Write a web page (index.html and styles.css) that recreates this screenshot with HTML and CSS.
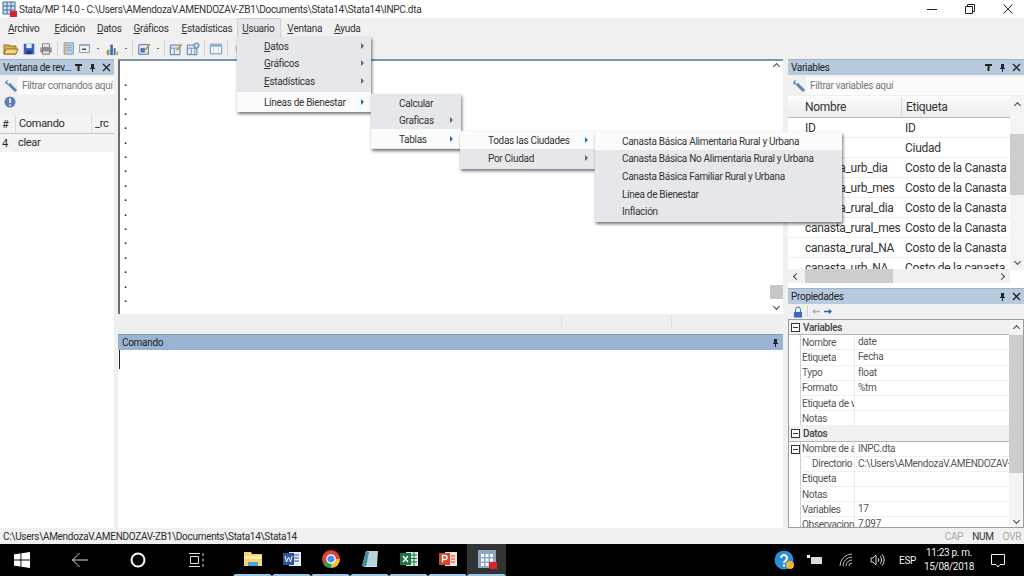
FILE: index.html
```html
<!DOCTYPE html>
<html lang="es">
<head>
    <meta charset="UTF-8">
    <title>Stata/MP 14.0</title>
    <link rel="stylesheet" href="styles.css">
</head>
<body>
<div class="app">
    <div class="titlebar">
        <svg class="app-icon" viewBox="0 0 16 16" width="16" height="16">
            <rect x="1" y="1" width="12" height="12" fill="#d6e2ef" stroke="#3d6a9c"/>
            <path d="M1 5h12M1 9h12M5 1v12M9 1v12" stroke="#3d6a9c"/>
            <rect x="8" y="10" width="7" height="6" fill="#d6262a"/>
        </svg>
        <span class="title-text">Stata/MP 14.0 - C:\Users\AMendozaV.AMENDOZAV-ZB1\Documents\Stata14\Stata14\INPC.dta</span>
        <div class="win-buttons">
            <svg viewBox="0 0 12 12" width="12" height="12"><path d="M1 6.500h10" stroke="#222"/></svg>
            <svg viewBox="0 0 12 12" width="12" height="12"><path d="M1.500 3.500h7v7h-7zM3.500 3.500v-2h7v7h-2" fill="none" stroke="#222"/></svg>
            <svg viewBox="0 0 12 12" width="12" height="12"><path d="M1.500 1.500l9 9M10.500 1.500l-9 9" stroke="#222"/></svg>
        </div>
    </div>

    <div class="menubar">
        <span class="menu-top"><u>A</u>rchivo</span>
        <span class="menu-top"><u>E</u>dición</span>
        <span class="menu-top"><u>D</u>atos</span>
        <span class="menu-top"><u>G</u>ráficos</span>
        <span class="menu-top"><u>E</u>stadísticas</span>
        <span class="menu-top open"><u>U</u>suario</span>
        <span class="menu-top"><u>V</u>entana</span>
        <span class="menu-top"><u>A</u>yuda</span>
    </div>

    <div class="toolbar">
        <svg class="wide" viewBox="0 0 16 16"><path d="M1 4h5l1 1h6v8H1z" fill="#d9b24c" stroke="#8f6f1f"/><path d="M3 8h12l-2 5H1z" fill="#f2d77e" stroke="#8f6f1f"/></svg>
        <svg viewBox="0 0 16 16"><path d="M2 2h12v12H2z" fill="#3a5fc0"/><path d="M5 2h6v5H5z" fill="#e8eef8"/><path d="M5 10h6v4H5z" fill="#22387c"/></svg>
        <svg viewBox="0 0 16 16"><path d="M4 2h8v4H4z" fill="#eee" stroke="#777"/><path d="M1.500 6h13v6h-13z" fill="#8b8f98"/><path d="M4 10h8v4H4z" fill="#ddd" stroke="#777"/></svg>
        <span class="tool-sep"></span>
        <svg class="slim" viewBox="0 0 16 16"><path d="M3 1h11v14H3z" fill="#bcd0e6" stroke="#6f8dab"/><path d="M5 4h7M5 7h7M5 10h7" stroke="#7d97b3"/><path d="M3 1v14" stroke="#d0a93c" stroke-width="2"/></svg>
        <svg class="slim" viewBox="0 0 16 16"><path d="M2 3h12v10H2z" fill="#eef1f5" stroke="#7b8794"/><path d="M2 3h12v2H2z" fill="#9db3c9"/><path d="M5 8h5v2H5z" fill="#555"/></svg>
        <span class="drop"></span>
        <svg class="after-drop" viewBox="0 0 16 16"><path d="M2 9h3v6H2z" fill="#7aa63c"/><path d="M6 3h3v12H6z" fill="#3a6ea8"/><path d="M10 7h2v8h-2z" fill="#3a6ea8"/><path d="M13 11h2v4h-2z" fill="#c9a23a"/></svg>
        <span class="drop"></span>
        <span class="tool-sep"></span>
        <svg viewBox="0 0 16 16"><path d="M2 3h11v11H2z" fill="#dfe8f2" stroke="#456a96"/><path d="M4 7h5v5H4z" fill="#4e79ad"/><path d="M8 9l6-7 1.500 1-6 7z" fill="#c09a32"/></svg>
        <span class="drop"></span>
        <span class="tool-sep"></span>
        <svg viewBox="0 0 16 16"><path d="M1.500 3.500h11v11h-11z" fill="#e3ebf4" stroke="#456a96"/><path d="M1.500 7h11M6 7v7" stroke="#6f8dab"/><path d="M8 9l6-7 1.500 1-6 7z" fill="#c09a32"/></svg>
        <svg viewBox="0 0 16 16"><path d="M1.500 3.500h11v11h-11z" fill="#e3ebf4" stroke="#456a96"/><path d="M1.500 7h11M6 7v7M10 7v7" stroke="#6f8dab"/><circle cx="12" cy="4" r="3" fill="#bcd6ea" stroke="#3b7ba8"/></svg>
        <span class="tool-sep"></span>
        <svg viewBox="0 0 16 16"><path d="M1.500 2.500h13v11h-13z" fill="#fff" stroke="#5d84ad"/><path d="M1.500 2.500h13v3h-13z" fill="#8fb0d0"/><path d="M5.500 5.500v8M10.500 5.500v8" stroke="#a9bfd5"/></svg>
        <span class="tool-sep"></span>
        <svg class="after-drop" viewBox="0 0 16 16"><circle cx="8" cy="8" r="6.500" fill="#c8c8c8"/></svg>
    </div>

    <div class="workspace">
        <aside class="review">
            <div class="panel-head">
                <span class="panel-title">Ventana de rev...</span>
                <span class="head-icons">
                    <svg viewBox="0 0 9 9" width="9" height="9"><path d="M1 1h7v2H5.500v5h-2V3H1z" fill="#222"/></svg>
                    <svg viewBox="0 0 9 9" width="9" height="9"><path d="M3 1h3v4h1v1H5v3H4V6H2V5h1z" fill="#222"/></svg>
                    <svg viewBox="0 0 9 9" width="9" height="9"><path d="M1 1l7 7M8 1L1 8" stroke="#222" stroke-width="1.300"/></svg>
                </span>
            </div>
            <div class="filter-row">
                <svg class="wrench" viewBox="0 0 14 14" width="14" height="14"><path d="M5 5l7 7" stroke="#5d84ad" stroke-width="3"/><path d="M1 4a3.500 3.500 0 0 1 3-3l-1 2.500L4.500 5 7 4a3.500 3.500 0 0 1-6 0z" fill="#5d84ad"/></svg>
                <span class="filter-box">Filtrar comandos aquí</span>
            </div>
            <div class="info-row">
                <svg viewBox="0 0 12 12" width="12" height="12"><circle cx="6" cy="6" r="5.500" fill="#5a7fb0"/><path d="M6 2.500v4.500M6 8.500v1.500" stroke="#fff" stroke-width="1.600"/></svg>
            </div>
            <div class="review-head">
                <span class="col-num">#</span>
                <span class="col-cmd">Comando</span>
                <span class="col-rc">_rc</span>
            </div>
            <div class="review-row">
                <span class="col-num">4</span>
                <span class="col-cmd">clear</span>
            </div>
        </aside>

        <main class="center">
            <div class="results">
                <div class="dots">
                    <div>.</div><div>.</div><div>.</div><div>.</div>
                    <div>.</div><div>.</div><div>.</div><div>.</div>
                    <div>.</div><div>.</div><div>.</div><div>.</div>
                    <div>.</div><div>.</div><div>.</div><div>.</div>
                </div>
                <div class="results-scroll">
                    <span class="arrow-up"></span>
                    <span class="results-thumb"></span>
                    <span class="arrow-down"></span>
                </div>
            </div>
            <div class="results-status">
                <span class="cell-wide"></span>
                <span class="cell-mid"></span>
                <span class="cell-end"></span>
            </div>
            <div class="command-head">
                <span>Comando</span>
                <svg viewBox="0 0 9 9" width="9" height="9"><path d="M3 1h3v4h1v1H5v3H4V6H2V5h1z" fill="#222"/></svg>
            </div>
            <div class="command-input"><span class="caret"></span></div>
        </main>

        <aside class="side">
            <section class="variables">
                <div class="panel-head">
                    <span class="panel-title">Variables</span>
                    <span class="head-icons">
                        <svg viewBox="0 0 9 9" width="9" height="9"><path d="M1 1h7v2H5.500v5h-2V3H1z" fill="#222"/></svg>
                        <svg viewBox="0 0 9 9" width="9" height="9"><path d="M3 1h3v4h1v1H5v3H4V6H2V5h1z" fill="#222"/></svg>
                        <svg viewBox="0 0 9 9" width="9" height="9"><path d="M1 1l7 7M8 1L1 8" stroke="#222" stroke-width="1.300"/></svg>
                    </span>
                </div>
                <div class="filter-row">
                    <svg class="wrench" viewBox="0 0 14 14" width="14" height="14"><path d="M5 5l7 7" stroke="#5d84ad" stroke-width="3"/><path d="M1 4a3.500 3.500 0 0 1 3-3l-1 2.500L4.500 5 7 4a3.500 3.500 0 0 1-6 0z" fill="#5d84ad"/></svg>
                    <span class="filter-box">Filtrar variables aquí</span>
                </div>
                <div class="var-body">
                    <div class="var-table">
                        <div class="var-head"><span class="var-name">Nombre</span><span class="var-label">Etiqueta</span></div>
                        <div class="var-rows">
                            <div class="var-row"><span class="var-name">ID</span><span class="var-label">ID</span></div>
                            <div class="var-row"><span class="var-name">Ciudad</span><span class="var-label">Ciudad</span></div>
                            <div class="var-row"><span class="var-name">canasta_urb_dia</span><span class="var-label">Costo de la Canasta</span></div>
                            <div class="var-row"><span class="var-name">canasta_urb_mes</span><span class="var-label">Costo de la Canasta</span></div>
                            <div class="var-row"><span class="var-name">canasta_rural_dia</span><span class="var-label">Costo de la Canasta</span></div>
                            <div class="var-row"><span class="var-name">canasta_rural_mes</span><span class="var-label">Costo de la Canasta</span></div>
                            <div class="var-row"><span class="var-name">canasta_rural_NA</span><span class="var-label">Costo de la Canasta</span></div>
                            <div class="var-row"><span class="var-name">canasta_urb_NA</span><span class="var-label">Costo de la canasta</span></div>
                        </div>
                    </div>
                    <div class="var-vscroll">
                        <span class="arrow-up"></span>
                        <span class="var-thumb"></span>
                        <span class="arrow-down"></span>
                    </div>
                    <div class="var-hscroll">
                        <span class="arrow-left"></span>
                        <span class="var-hthumb"></span>
                        <span class="arrow-right"></span>
                    </div>
                </div>
            </section>

            <section class="props">
                <div class="panel-head">
                    <span class="panel-title">Propiedades</span>
                    <span class="head-icons">
                        <svg viewBox="0 0 9 9" width="9" height="9"><path d="M3 1h3v4h1v1H5v3H4V6H2V5h1z" fill="#222"/></svg>
                        <svg viewBox="0 0 9 9" width="9" height="9"><path d="M1 1l7 7M8 1L1 8" stroke="#222" stroke-width="1.300"/></svg>
                    </span>
                </div>
                <div class="props-tools">
                    <svg viewBox="0 0 10 12" width="10" height="12"><path d="M2.500 6V3.500a2.500 2.500 0 0 1 5 0V6" fill="none" stroke="#4a6fb5"/><rect x="1" y="6" width="8" height="5.500" fill="#3f66c2"/></svg>
                    <span class="props-sep"></span>
                    <svg viewBox="0 0 10 8" width="8" height="7"><path d="M0 4l4-3.500V3h6v2H4v2.500z" fill="#a9b4c0"/></svg>
                    <svg viewBox="0 0 10 8" width="8" height="7"><path d="M10 4L6 .5V3H0v2h6v2.500z" fill="#2c62b8"/></svg>
                </div>
                <div class="props-body">
                    <div class="props-grid">
                        <div class="group-row"><span class="expander"></span>Variables</div>
                        <div class="prop-row"><span class="prop-key">Nombre</span><span class="prop-val">date</span></div>
                        <div class="prop-row"><span class="prop-key">Etiqueta</span><span class="prop-val">Fecha</span></div>
                        <div class="prop-row"><span class="prop-key">Typo</span><span class="prop-val">float</span></div>
                        <div class="prop-row"><span class="prop-key">Formato</span><span class="prop-val">%tm</span></div>
                        <div class="prop-row"><span class="prop-key">Etiqueta de valor</span><span class="prop-val"></span></div>
                        <div class="prop-row"><span class="prop-key">Notas</span><span class="prop-val"></span></div>
                        <div class="group-row"><span class="expander"></span>Datos</div>
                        <div class="prop-row"><span class="expander inner"></span><span class="prop-key">Nombre de archivo</span><span class="prop-val">INPC.dta</span></div>
                        <div class="prop-row"><span class="prop-key indent">Directorio</span><span class="prop-val">C:\Users\AMendozaV.AMENDOZAV-ZB1</span></div>
                        <div class="prop-row"><span class="prop-key">Etiqueta</span><span class="prop-val"></span></div>
                        <div class="prop-row"><span class="prop-key">Notas</span><span class="prop-val"></span></div>
                        <div class="prop-row"><span class="prop-key">Variables</span><span class="prop-val">17</span></div>
                        <div class="prop-row"><span class="prop-key">Observaciones</span><span class="prop-val">7,097</span></div>
                    </div>
                    <div class="props-scroll">
                        <span class="arrow-up"></span>
                        <span class="props-thumb"></span>
                        <span class="arrow-down"></span>
                    </div>
                </div>
            </section>
        </aside>
    </div>

    <div class="statusbar">
        <span>C:\Users\AMendozaV.AMENDOZAV-ZB1\Documents\Stata14\Stata14</span>
        <span class="keys"><span>CAP</span><span class="on">NUM</span><span>OVR</span></span>
    </div>

    <div class="taskbar">
        <div class="task-left">
            <div class="task-btn start">
                <svg viewBox="0 0 16 16" width="16" height="16"><path d="M0 2.300l6.500-.9v6.100H0zM7.400 1.300L16 0v7.500H7.400zM0 8.500h6.500v6.100L0 13.700zM7.400 8.500H16V16l-8.600-1.300z" fill="#fff"/></svg>
            </div>
            <div class="task-btn">
                <svg viewBox="0 0 18 16" width="18" height="16"><path d="M17 8H1.500M8.500 1l-7 7 7 7" fill="none" stroke="#ddd"/></svg>
            </div>
            <div class="task-btn">
                <svg viewBox="0 0 16 16" width="16" height="16"><circle cx="8" cy="8" r="6.500" fill="none" stroke="#fff" stroke-width="2"/></svg>
            </div>
            <div class="task-btn">
                <svg viewBox="0 0 18 16" width="18" height="16"><path d="M3.500 4.500h8v7h-8zM2 1.500h11M2 14.500h11M16 1v3M16 6.500v3M16 12v3" fill="none" stroke="#ddd"/></svg>
            </div>
        </div>
        <div class="task-apps">
            <div class="task-app">
                <svg viewBox="0 0 18 16" width="18" height="16"><path d="M0 1h7l1 2h10v12H0z" fill="#f4d56f"/><path d="M0 5h18v3H0z" fill="#fbe9a8"/><path d="M4 11h10v4H4z" fill="#4aa3df"/></svg>
            </div>
            <div class="task-app">
                <svg viewBox="0 0 18 16" width="18" height="16"><rect x="6" y="1" width="12" height="14" fill="#e6edf7"/><path d="M11 4h5M11 7h5M11 10h5" stroke="#2b579a"/><rect y="2" width="11" height="12" fill="#2b579a"/><path d="M2 5l1.500 6 2-5 2 5L9 5" fill="none" stroke="#fff"/></svg>
            </div>
            <div class="task-app">
                <svg viewBox="0 0 18 18" width="18" height="18"><circle cx="9" cy="9" r="9" fill="#db4437"/><path d="M9 9L1 13.500A9 9 0 0 0 9.500 18z" fill="#2fa04f"/><path d="M9 9h9a9 9 0 0 1-8.500 9z" fill="#f6c02c"/><circle cx="9" cy="9" r="4.200" fill="#4a8af4" stroke="#fff" stroke-width="1.200"/></svg>
            </div>
            <div class="task-app">
                <svg viewBox="0 0 18 18" width="18" height="18"><path d="M5 1h12l-1 15H1z" fill="#b7d3dc"/><path d="M1 16L5 1l3 1-3 15z" fill="#4a8b9c"/><path d="M5 16h11v1H2z" fill="#dbe7ea"/></svg>
            </div>
            <div class="task-app">
                <svg viewBox="0 0 18 16" width="18" height="16"><rect x="6" y="1" width="12" height="14" fill="#d9eadf"/><path d="M11 4h6M11 7.500h6M11 11h6M14 1v14" stroke="#217346"/><rect y="2" width="11" height="12" fill="#217346"/><path d="M3 5l5 6M8 5l-5 6" stroke="#fff" stroke-width="1.300"/></svg>
            </div>
            <div class="task-app">
                <svg viewBox="0 0 18 16" width="18" height="16"><rect x="6" y="1" width="12" height="14" fill="#f6ddd5"/><path d="M12 5h4M12 8h4M12 11h4" stroke="#d24726"/><rect y="2" width="11" height="12" fill="#d24726"/><path d="M3.500 11.500v-7h2.500a2 2 0 0 1 0 4H3.500" fill="none" stroke="#fff" stroke-width="1.300"/></svg>
            </div>
            <div class="task-app active">
                <svg viewBox="0 0 20 20" width="20" height="20"><rect x="1" y="1" width="18" height="18" fill="#8ca6c2"/><path d="M4 5h3v3H4zM8.500 5h3v3h-3zM13 5h3v3h-3zM4 9.500h3v3H4zM8.500 9.500h3v3h-3zM13 9.500h3v3h-3zM4 14h3v3H4zM8.500 14h3v3h-3z" fill="#fff"/><rect x="12" y="13" width="8" height="7" fill="#d6262a"/></svg>
            </div>
        </div>
        <div class="tray">
            <svg class="tray-help" viewBox="0 0 20 20" width="20" height="20"><circle cx="10" cy="10" r="9.500" fill="#2a8fd8"/><path d="M7 8a3 3 0 1 1 4.500 2.600c-1 .6-1.500 1-1.500 2.400M10 14.500v2" fill="none" stroke="#fff" stroke-width="2"/><circle cx="16" cy="15" r="4" fill="#f2b233"/></svg>
            <svg class="tray-power" viewBox="0 0 16 12" width="16" height="12"><path d="M5 3h11v7H5z" fill="#ddd"/><path d="M1 1h3v3H1z" fill="#fff"/></svg>
            <svg class="tray-wifi" viewBox="0 0 14 14" width="14" height="14"><path d="M1 13A12 12 0 0 1 13 1M4 13a9 9 0 0 1 9-9M7 13a6 6 0 0 1 6-6M10 13a3 3 0 0 1 3-3" fill="none" stroke="#bbb"/></svg>
            <svg class="tray-sound" viewBox="0 0 15 14" width="15" height="14"><path d="M1 5h2l3-3v10L3 9H1z" fill="none" stroke="#ddd"/><path d="M8 5a3 3 0 0 1 0 4M10 3a6 6 0 0 1 0 8M12 1.500a8 8 0 0 1 0 11" fill="none" stroke="#ddd"/></svg>
            <span class="tray-lang">ESP</span>
            <div class="clock"><span>11:23 p. m.</span><span>15/08/2018</span></div>
            <svg class="tray-note" viewBox="0 0 16 16" width="16" height="16"><path d="M1.500 2.500h13v10H10l-2 2.500-2-2.500H1.500z" fill="none" stroke="#eee"/></svg>
        </div>
    </div>

    <!-- menus abiertos -->
    <div class="popup menu-user">
        <div class="item"><span><u>D</u>atos</span><i class="sub"></i></div>
        <div class="item"><span><u>G</u>ráficos</span><i class="sub"></i></div>
        <div class="item"><span><u>E</u>stadísticas</span><i class="sub"></i></div>
        <div class="item hot sep"><span>Líneas de Bienestar</span><i class="sub blue"></i></div>
    </div>
    <div class="popup menu-lineas">
        <div class="item"><span>Calcular</span></div>
        <div class="item"><span>Graficas</span><i class="sub"></i></div>
        <div class="item hot"><span>Tablas</span><i class="sub blue"></i></div>
    </div>
    <div class="popup menu-tablas">
        <div class="item hot"><span>Todas las Ciudades</span><i class="sub blue"></i></div>
        <div class="item"><span>Por Ciudad</span><i class="sub"></i></div>
    </div>
    <div class="popup menu-ciudades">
        <div class="item hot"><span>Canasta Básica Alimentaria Rural y Urbana</span></div>
        <div class="item"><span>Canasta Básica No Alimentaria Rural y Urbana</span></div>
        <div class="item"><span>Canasta Básica Familiar Rural y Urbana</span></div>
        <div class="item"><span>Línea de Bienestar</span></div>
        <div class="item"><span>Inflación</span></div>
    </div>
</div>
</body>
</html>
```

FILE: styles.css
```css
* {
    box-sizing: border-box;
}

body {
    margin: 0;
    font-family: Roboto, "Open Sans", sans-serif;
    letter-spacing: -0.3px;
    color: #2b2b2b;
    overflow: hidden;
}

.app {
    position: relative;
    width: 1024px;
    height: 576px;
    display: flex;
    flex-direction: column;
    background-color: #f0f0f0;
    overflow: hidden;
}

/* title + menu + toolbar */
.titlebar {
    height: 18px;
    display: flex;
    align-items: center;
    background-color: #ffffff;
    padding-left: 2px;
    font-size: 10px;
}

.title-text {
    margin-left: 1px;
    color: #333;
    white-space: nowrap;
}

.win-buttons {
    margin-left: auto;
    display: flex;
    gap: 26px;
    padding-right: 10px;
}

.menubar {
    height: 20px;
    display: flex;
    padding-left: 3px;
    font-size: 10px;
    background-color: #f0f0f0;
}

.menu-top {
    display: flex;
    align-items: center;
    padding: 0 5px;
    margin-right: 2px;
    color: #333;
}

.menu-top:first-child {
    margin-right: 5px;
}

.menu-top:nth-child(4) {
    margin-right: 3px;
}

.menu-top.open {
    width: 44px;
    margin-left: -2px;
    margin-right: 1px;
    background-color: #e6e7eb;
    border: 1px solid #cfd0d4;
    border-bottom: 0;
    padding: 0 4px;
}

.toolbar {
    height: 21px;
    display: flex;
    align-items: center;
    gap: 3px;
    padding-left: 3px;
    background-color: #f0f0f0;
}

.toolbar svg {
    width: 14px;
    height: 14px;
    flex-shrink: 0;
}

.toolbar svg.wide {
    width: 16px;
    height: 16px;
}

.toolbar svg.slim {
    width: 13px;
    height: 13px;
}

.toolbar svg.after-drop {
    margin-left: 2px;
}

.tool-sep {
    width: 1px;
    height: 15px;
    margin: 0 1px;
    background-color: #d2d2d2;
}

.drop {
    width: 4px;
    height: 2px;
    margin-left: 2px;
    background-color: #666;
    clip-path: polygon(0 0, 100% 0, 50% 100%);
}

/* main area */
.workspace {
    flex: 1;
    display: flex;
    min-height: 0;
}

.panel-head {
    height: 16px;
    flex-shrink: 0;
    display: flex;
    align-items: center;
    justify-content: space-between;
    padding: 0 3px;
    background-color: #b7c9dd;
    border-top: 1px solid #9fb2c8;
    font-size: 10px;
    color: #222;
    white-space: nowrap;
}

.head-icons {
    display: flex;
    gap: 5px;
}

.filter-row {
    height: 21px;
    display: flex;
    align-items: center;
    padding-left: 4px;
    background-color: #f0f0f0;
    font-size: 10px;
    color: #777;
}

.filter-box {
    flex: 1;
    min-width: 0;
    height: 18px;
    line-height: 18px;
    padding-left: 4px;
    background-color: #fbfbfb;
    white-space: nowrap;
    overflow: hidden;
}

.review {
    width: 114px;
    display: flex;
    flex-direction: column;
    margin-right: 4px;
    background-color: #ffffff;
}

.info-row {
    height: 19px;
    display: flex;
    padding: 0 0 0 4px;
    background-color: #f0f0f0;
}

.review-head,
.review-row {
    display: flex;
    align-items: center;
    font-size: 11px;
    height: 19px;
    background-color: #f3f3f3;
}

.review-row {
    height: 18px;
}

.review-head {
    border-bottom: 1px solid #c6c6c6;
}

.col-num {
    width: 15px;
    padding-left: 2px;
}

.col-cmd {
    width: 76px;
    padding-left: 3px;
    border-left: 1px solid #dcdcdc;
    line-height: 18px;
}

.review-row .col-cmd {
    border-left: 0;
}

.col-rc {
    width: 23px;
    padding-left: 3px;
    border-left: 1px solid #dcdcdc;
    line-height: 18px;
}

.center {
    width: 665px;
    display: flex;
    flex-direction: column;
    margin-right: 5px;
}

.results {
    height: 255px;
    display: flex;
    background-color: #ffffff;
    border-left: 2px solid #6e6e6e;
    border-top: 2px solid #7c93ad;
}

.dots {
    flex: 1;
    padding: 15px 0 0 4px;
    font-size: 11px;
    font-weight: 700;
    line-height: 14.400px;
    color: #222;
}

.results-scroll {
    width: 14px;
    display: flex;
    flex-direction: column;
    align-items: center;
    padding: 3px 0 5px;
}

.results-thumb {
    width: 13px;
    height: 14px;
    margin-top: auto;
    margin-bottom: 5px;
    background-color: #c8c8c8;
}

.arrow-up,
.arrow-down,
.arrow-left,
.arrow-right {
    display: block;
    width: 5px;
    height: 5px;
    border-left: 1px solid #444;
    border-top: 1px solid #444;
    flex-shrink: 0;
}

.arrow-up {
    transform: rotate(45deg);
}

.arrow-down {
    transform: rotate(225deg);
}

.arrow-left {
    transform: rotate(-45deg);
}

.arrow-right {
    transform: rotate(135deg);
}

.results-status {
    height: 15px;
    margin-top: 1px;
    display: flex;
    background-color: #efefef;
}

.cell-wide {
    width: 443px;
}

.cell-mid {
    width: 111px;
    border-left: 1px solid #e2e2e2;
    border-right: 1px solid #e2e2e2;
}

.command-head {
    height: 16px;
    margin-top: 4px;
    display: flex;
    align-items: center;
    justify-content: space-between;
    padding: 0 3px 0 4px;
    background-color: #98b4d2;
    border-top: 1px solid #8198b2;
    font-size: 10px;
    color: #222;
}

.command-input {
    flex: 1;
    background-color: #ffffff;
}

.caret {
    display: block;
    width: 1px;
    height: 19px;
    margin-left: 1px;
    background-color: #222;
}

/* right column */
.side {
    width: 236px;
    display: flex;
    flex-direction: column;
}

.variables {
    height: 229px;
    display: flex;
    flex-direction: column;
}

.var-body {
    position: relative;
    flex: 1;
    background-color: #ffffff;
    overflow: hidden;
}

.var-table {
    height: 173px;
    width: 222px;
    padding-top: 1px;
    overflow: hidden;
    font-size: 12px;
    color: #333;
}

.var-head {
    height: 21px;
    display: flex;
    align-items: center;
    background: linear-gradient(#fafafa, #ececec);
    border-bottom: 1px solid #b9b9b9;
}

.var-row {
    height: 20px;
    display: flex;
    align-items: center;
    border-bottom: 1px solid #efefef;
    white-space: nowrap;
}

.var-name {
    width: 113px;
    padding-left: 17px;
    flex-shrink: 0;
    overflow: hidden;
}

.var-head .var-label {
    border-left: 1px solid #dcdcdc;
    line-height: 20px;
}

.var-label {
    padding-left: 4px;
    overflow: hidden;
}

.var-vscroll {
    position: absolute;
    top: 0;
    right: 0;
    width: 14px;
    height: 174px;
    display: flex;
    flex-direction: column;
    align-items: center;
    padding-top: 7px;
    background-color: #f4f4f4;
}

.var-thumb {
    width: 14px;
    height: 61px;
    margin-top: 26px;
    margin-bottom: auto;
    background-color: #cdcdcd;
}

.var-vscroll .arrow-down {
    margin-bottom: 6px;
}

.var-hscroll {
    position: absolute;
    left: 0;
    right: 14px;
    bottom: 5px;
    height: 14px;
    display: flex;
    align-items: center;
    justify-content: space-between;
    padding: 0 6px;
    background-color: #f0f0f0;
}

.var-hthumb {
    width: 88px;
    height: 14px;
    margin-right: auto;
    margin-left: 6px;
    background-color: #cdcdcd;
}

.props {
    flex: 1;
    display: flex;
    flex-direction: column;
    min-height: 0;
}

.props-tools {
    height: 15px;
    display: flex;
    align-items: center;
    gap: 4px;
    padding-left: 5px;
    background-color: #f0f0f0;
}

.props-sep {
    width: 1px;
    height: 11px;
    background-color: #d0d0d0;
}

.props-body {
    flex: 1;
    display: flex;
    min-height: 0;
    background-color: #ffffff;
    border: 1px solid #9c9c9c;
    overflow: hidden;
}

.props-grid {
    flex: 1;
    min-width: 0;
    font-size: 10px;
    color: #555;
}

.group-row {
    height: 15.200px;
    display: flex;
    align-items: center;
    background-color: #f0f0f0;
    border-bottom: 1px solid #b4b4b4;
    font-weight: 500;
    color: #444;
}

.expander {
    width: 9px;
    height: 9px;
    margin: 0 3px 0 2px;
    flex-shrink: 0;
    border: 1px solid #333;
    background: linear-gradient(#333, #333) center / 5px 1px no-repeat #fff;
}

.expander.inner {
    position: absolute;
    left: -10px;
    top: 3px;
    margin: 0;
}

.prop-row {
    position: relative;
    height: 15.200px;
    display: flex;
    align-items: center;
    margin-left: 11px;
    border-left: 1px solid #cfcfcf;
    border-bottom: 1px solid #f0f0f0;
    white-space: nowrap;
}

.prop-key {
    width: 53px;
    padding-left: 1px;
    flex-shrink: 0;
    overflow: hidden;
}

.prop-key.indent {
    padding-left: 11px;
}

.prop-val {
    padding-left: 3px;
    align-self: stretch;
    line-height: 14px;
    border-left: 1px solid #ececec;
    overflow: hidden;
    min-width: 0;
    flex: 1;
}

.props-scroll {
    width: 14px;
    flex-shrink: 0;
    display: flex;
    flex-direction: column;
    align-items: center;
    padding: 6px 0 4px;
    background-color: #f4f4f4;
}

.props-thumb {
    width: 14px;
    height: 138px;
    margin: 4px 0 auto;
    background-color: #cdcdcd;
}

/* bottom */
.statusbar {
    height: 16px;
    display: flex;
    align-items: center;
    justify-content: space-between;
    padding: 0 3px;
    font-size: 10px;
    background-color: #f0f0f0;
}

.keys {
    display: flex;
    gap: 9px;
    color: #a8a8a8;
}

.keys .on {
    color: #333;
}

.taskbar {
    height: 32px;
    display: flex;
    align-items: stretch;
    background-color: #000000;
    color: #eee;
    font-size: 10px;
}

.task-left {
    display: flex;
    width: 233px;
}

.task-btn {
    width: 58px;
    display: flex;
    align-items: center;
    justify-content: center;
}

.task-btn.start {
    width: 44px;
    margin-right: 7px;
}

.task-apps {
    display: flex;
}

.task-app {
    width: 39px;
    display: flex;
    align-items: center;
    justify-content: center;
    border-bottom: 2px solid #9fc8e6;
    border-left: 2px solid #000;
    border-right: 2px solid #000;
}

.task-app.active {
    background-color: #333333;
    border-left-color: #333;
    border-right-color: #333;
}

.tray {
    flex: 1;
    display: flex;
    align-items: center;
}

.tray-help {
    margin-left: 268px;
}

.tray-power {
    margin-left: 12px;
}

.tray-wifi {
    margin-left: 17px;
}

.tray-sound {
    margin-left: 17px;
}

.tray-lang {
    margin-left: 14px;
}

.clock {
    width: 48px;
    display: flex;
    flex-direction: column;
    align-items: center;
    margin-left: 9px;
    line-height: 14px;
    white-space: nowrap;
}

.tray-note {
    margin-left: 17px;
}

/* open menus */
.popup {
    position: absolute;
    background-color: #e6e7eb;
    box-shadow: 1px 2px 3px rgba(0, 0, 0, 0.55);
    font-size: 10px;
    color: #333;
}

.item {
    display: flex;
    align-items: center;
    justify-content: space-between;
    white-space: nowrap;
}

.item span {
    padding-top: 1px;
}

.item.hot {
    background-color: #fbfbfc;
}

.sub {
    width: 0;
    height: 0;
    border-top: 3px solid transparent;
    border-bottom: 3px solid transparent;
    border-left: 3px solid #666;
}

.sub.blue {
    border-left-color: #1f6fb2;
}

.menu-user {
    left: 237px;
    top: 37px;
    width: 134px;
}

.menu-user .item {
    height: 17.500px;
    padding: 0 7px 0 27px;
}

.menu-user .item.sep {
    height: 20px;
    margin-top: 2px;
}

.menu-lineas {
    left: 371px;
    top: 94px;
    width: 90px;
    padding-bottom: 1px;
}

.menu-lineas .item {
    height: 17.500px;
    padding: 0 8px 0 28px;
}

.menu-lineas .item.hot {
    height: 19px;
}

.menu-tablas {
    left: 460px;
    top: 131px;
    width: 135px;
    padding-bottom: 2px;
}

.menu-tablas .item {
    height: 18px;
    padding: 0 7px 0 28px;
}

.menu-ciudades {
    left: 595px;
    top: 132px;
    width: 247px;
    padding-bottom: 2px;
}

.menu-ciudades .item {
    height: 17.600px;
    padding-left: 27px;
}
```
